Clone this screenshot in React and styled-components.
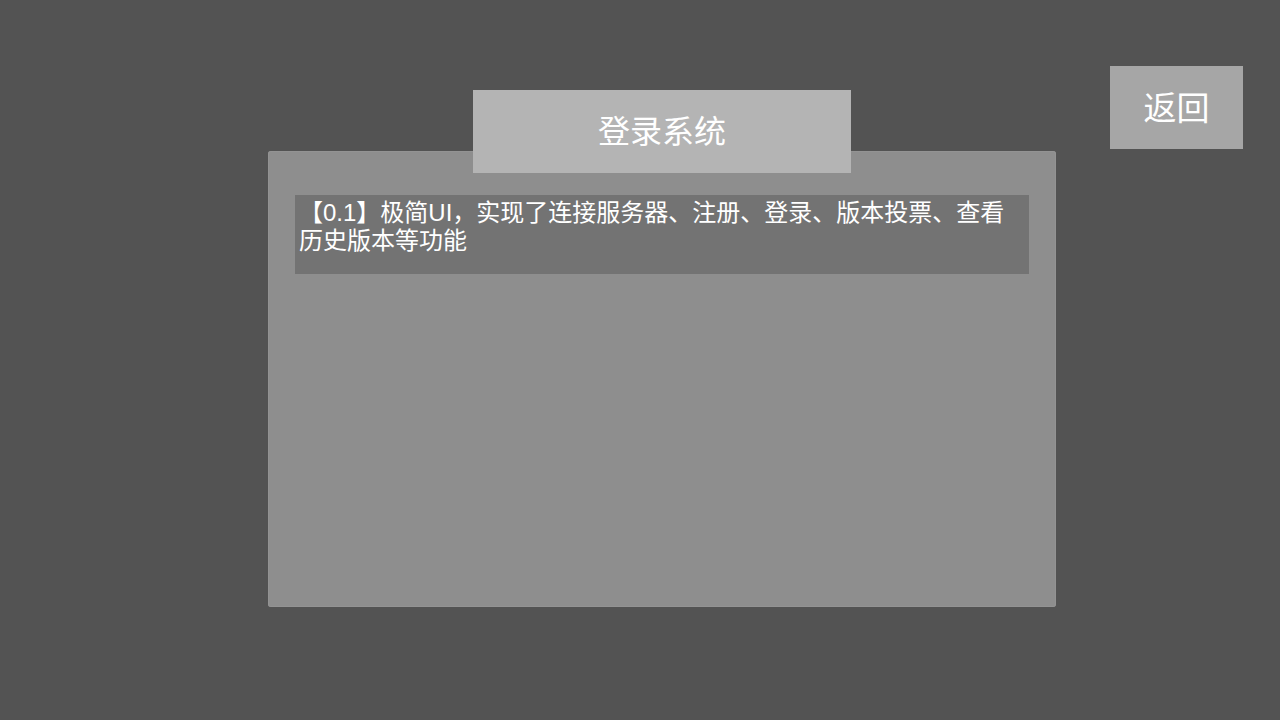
import React from "react";
import styled, { createGlobalStyle } from "styled-components";

const Global = createGlobalStyle`
  html, body { margin: 0; padding: 0; background: #535353; }
  body { font-family: "Liberation Sans", "Noto Sans CJK SC", sans-serif; }
  * { box-sizing: border-box; }
`;

const Screen = styled.div`
  width: 1280px;
  height: 720px;
  overflow: hidden;
  background: #535353;
  display: grid;
  grid-template-columns: 268px 788px 1fr;
  align-items: start;
`;

const Stage = styled.div`
  grid-column: 2;
  padding-top: 90px;
  display: flex;
  flex-direction: column;
  align-items: center;
`;

const TitleBar = styled.div`
  position: relative;
  z-index: 1;
  width: 378px;
  height: 83px;
  padding-bottom: 5px;
  background: #b4b4b4;
  color: #ffffff;
  font-size: 32px;
  display: flex;
  align-items: center;
  justify-content: center;
  font-family: "Noto Sans CJK SC", sans-serif;
`;

const Panel = styled.div`
  margin-top: -22px;
  width: 788px;
  height: 456px;
  background: #8e8e8e;
  border-radius: 3px;
  box-shadow: inset 0 0 0 1px #939393;
  padding: 44px 27px;
`;

const NoteBox = styled.div`
  height: 79px;
  background: #737373;
  padding: 4px 20px 0 4px;
  color: #ffffff;
  font-size: 24px;
  line-height: 28px;
`;

const BackButton = styled.button`
  grid-column: 3;
  justify-self: end;
  margin: 66px 37px 0 0;
  width: 133px;
  height: 83px;
  border: none;
  padding: 0 0 4px 0;
  background: #a6a6a6;
  color: #ffffff;
  font-size: 33px;
  font-family: "Noto Sans CJK SC", sans-serif;
  display: flex;
  align-items: center;
  justify-content: center;
  cursor: pointer;
`;

export default function App() {
  return (
    <>
      <Global />
      <Screen>
        <Stage>
          <TitleBar>登录系统</TitleBar>
          <Panel>
            <NoteBox>【0.1】极简UI，实现了连接服务器、注册、登录、版本投票、查看历史版本等功能</NoteBox>
          </Panel>
        </Stage>
        <BackButton>返回</BackButton>
      </Screen>
    </>
  );
}
